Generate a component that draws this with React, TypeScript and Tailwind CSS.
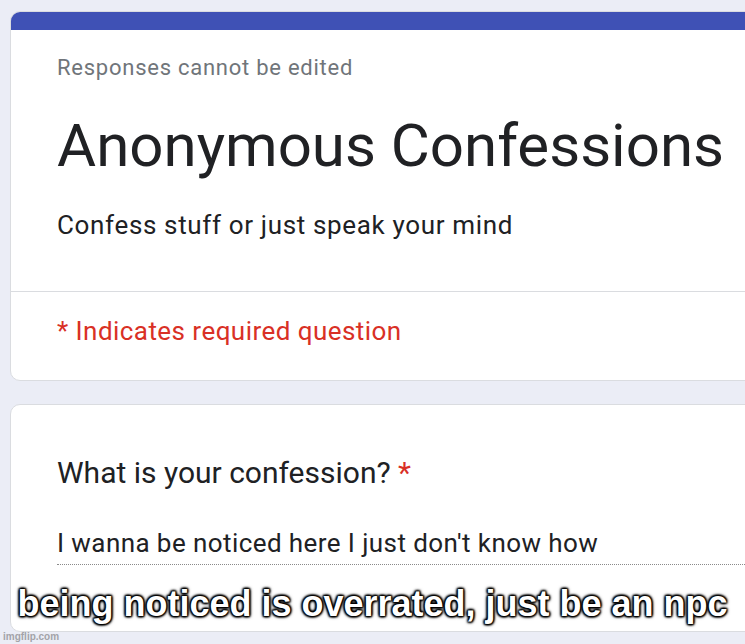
export default function App() {
  return (
    <div className="relative h-[644px] w-[745px] overflow-hidden bg-[#ebedf6] pl-[10px] pt-[11px] font-['Roboto',sans-serif]">
      {/* header card */}
      <div className="h-[370px] w-[770px] overflow-hidden rounded-l-[10px] border border-[#dadce0] bg-white">
        <div className="h-[18px] bg-[#3f51b5]" />
        <div className="pl-[46px] pt-[24px]">
          <div className="text-[22px] leading-[28px] tracking-[0.75px] text-[#70757a]">Responses cannot be edited</div>
          <h1 className="mt-[28px] text-[60px] leading-[72px] text-[#202124]">Anonymous Confessions</h1>
          <div className="mt-[27px] text-[26px] leading-[32px] tracking-[0.65px] text-[#202124]">Confess stuff or just speak your mind</div>
        </div>
        <div className="mt-[50px] h-px bg-[#dadce0]" />
        <div className="pl-[46px] pt-[23px] text-[26px] leading-[32px] tracking-[0.45px] text-[#d93025]">* Indicates required question</div>
      </div>

      {/* question card */}
      <div className="mt-[23px] h-[228px] w-[770px] rounded-l-[10px] border border-[#dadce0] bg-white pl-[46px] pr-[26px] pt-[50px]">
        <div className="text-[30px] leading-[36px] text-[#202124]">
          What is your confession? <span className="text-[#d93025]">*</span>
        </div>
        <div className="mt-[36px] border-b border-dotted border-[#8a8a8a] pb-[5px] text-[26px] leading-[32px] tracking-[0.42px] text-[#202124]">
          I wanna be noticed here I just don't know how
        </div>
      </div>

      {/* meme caption */}
      <div className="absolute left-0 right-0 top-[582px] text-center font-['Liberation_Sans',Arial,sans-serif] text-[36px] font-bold leading-[44px] text-white [text-shadow:0_0_2px_#000,0_0_3px_#000,0_0_4px_#000,1px_1px_2px_#000,-1px_-1px_2px_#000,1px_-1px_2px_#000,-1px_1px_2px_#000]">
        being noticed is overrated, just be an npc
      </div>
      <div className="absolute bottom-[1px] left-[3px] font-['Liberation_Sans',Arial,sans-serif] text-[10px] font-bold leading-[12px] text-[#a3a3a8]">
        imgflip.com
      </div>
    </div>
  );
}
